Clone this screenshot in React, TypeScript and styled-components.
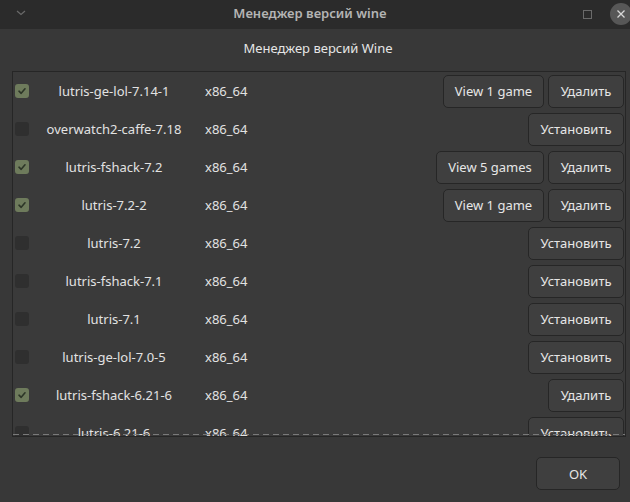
import React from "react";
import styled, { createGlobalStyle } from "styled-components";

const GlobalStyle = createGlobalStyle`
  html, body {
    margin: 0;
    padding: 0;
    background: #383838;
  }
  body {
    font-family: "Noto Sans", "Open Sans", sans-serif;
    font-size: 13px;
    color: #e4e4e4;
  }
`;

type Build = {
  name: string;
  arch: string;
  installed: boolean;
  games?: number;
};

const builds: Build[] = [
  { name: "lutris-ge-lol-7.14-1", arch: "x86_64", installed: true, games: 1 },
  { name: "overwatch2-caffe-7.18", arch: "x86_64", installed: false },
  { name: "lutris-fshack-7.2", arch: "x86_64", installed: true, games: 5 },
  { name: "lutris-7.2-2", arch: "x86_64", installed: true, games: 1 },
  { name: "lutris-7.2", arch: "x86_64", installed: false },
  { name: "lutris-fshack-7.1", arch: "x86_64", installed: false },
  { name: "lutris-7.1", arch: "x86_64", installed: false },
  { name: "lutris-ge-lol-7.0-5", arch: "x86_64", installed: false },
  { name: "lutris-fshack-6.21-6", arch: "x86_64", installed: true },
  { name: "lutris-6.21-6", arch: "x86_64", installed: false },
];

const Window = styled.div`
  width: 630px;
  height: 502px;
  display: flex;
  flex-direction: column;
  background: #383838;
  overflow: hidden;
`;

const TitleBar = styled.div`
  height: 29px;
  flex: none;
  display: grid;
  grid-template-columns: 40px 1fr 60px;
  align-items: center;
  background: #2b2b2b;
  padding-bottom: 4px;
  box-sizing: border-box;
`;

const TitleText = styled.div`
  text-align: center;
  font-weight: 600;
  font-size: 13px;
  color: #b4b4b4;
  padding-left: 10px;
`;

const TitleLeft = styled.div`
  display: flex;
  justify-content: center;
  padding-left: 2px;
`;

const TitleControls = styled.div`
  display: flex;
  align-items: center;
  justify-content: flex-end;
  gap: 18px;
  padding-top: 3px;
`;

const CloseButton = styled.div`
  width: 22px;
  height: 22px;
  border-radius: 50%;
  background: #575757;
  display: flex;
  align-items: center;
  justify-content: center;
  margin-right: -2px;
`;

const Heading = styled.div`
  height: 42px;
  flex: none;
  box-sizing: border-box;
  padding-top: 10px;
  padding-left: 6px;
  text-align: center;
  color: #e6e6e6;
  line-height: 18px;
`;

const ListFrame = styled.div`
  position: relative;
  height: 366px;
  flex: none;
  margin: 0 4px 0 12px;
  border: 1px solid #262626;
  background: #3a3a3a;
  box-sizing: border-box;
  overflow: hidden;
`;

/* scroll undershoot marker drawn over the last visible row */
const Undershoot = styled.div`
  position: absolute;
  left: 0;
  right: 0;
  bottom: 1px;
  height: 1px;
  background-image: linear-gradient(to right, #7a7a7a 0 6px, transparent 6px 10px);
  background-size: 10px 1px;
`;

const Row = styled.div`
  height: 38px;
  display: grid;
  grid-template-columns: 14px 170px 1fr auto;
  align-items: center;
  padding: 0 1px 0 2px;
`;

const Check = styled.div<{ $checked: boolean }>`
  width: 14px;
  height: 14px;
  border-radius: 3px;
  background: ${(p) => (p.$checked ? "#6e7b5c" : "#2f2f2f")};
  display: flex;
  align-items: center;
  justify-content: center;
`;

const Name = styled.div`
  text-align: center;
  white-space: nowrap;
  color: #e2e2e2;
`;

const Arch = styled.div`
  padding-left: 6px;
  color: #e2e2e2;
`;

const Actions = styled.div`
  display: flex;
  gap: 4px;
  justify-content: flex-end;
`;

const Button = styled.button<{ $width: number }>`
  width: ${(p) => p.$width}px;
  height: 33px;
  box-sizing: border-box;
  border: 1px solid #262626;
  border-radius: 5px;
  background: #3f3f3f;
  color: #e6e6e6;
  font-family: inherit;
  font-size: 13px;
  padding: 0;
  cursor: pointer;
`;

const Footer = styled.div`
  flex: none;
  display: flex;
  justify-content: flex-end;
  padding: 20px 10px 12px 0;
`;

const CheckMark = () => (
  <svg width="10" height="10" viewBox="0 0 10 10">
    <path d="M2 5.2 L4.2 7.3 L8 2.8" fill="none" stroke="#2c3527" strokeWidth="1.6" strokeLinecap="round" strokeLinejoin="round" />
  </svg>
);

function BuildRow({ build }: { build: Build }) {
  return (
    <Row>
      <Check $checked={build.installed}>{build.installed && <CheckMark />}</Check>
      <Name>{build.name}</Name>
      <Arch>{build.arch}</Arch>
      <Actions>
        {build.installed && build.games ? (
          <Button $width={build.games > 1 ? 108 : 101}>
            {build.games > 1 ? `View ${build.games} games` : `View ${build.games} game`}
          </Button>
        ) : null}
        {build.installed ? <Button $width={76}>Удалить</Button> : <Button $width={96}>Установить</Button>}
      </Actions>
    </Row>
  );
}

export default function App() {
  return (
    <Window>
      <GlobalStyle />
      <TitleBar>
        <TitleLeft>
          <svg width="10" height="6" viewBox="0 0 10 6">
            <path d="M1 1 L5 4.5 L9 1" fill="none" stroke="#6a6a6a" strokeWidth="1.2" />
          </svg>
        </TitleLeft>
        <TitleText>Менеджер версий wine</TitleText>
        <TitleControls>
          <svg width="9" height="9" viewBox="0 0 9 9">
            <rect x="0.5" y="0.5" width="8" height="8" fill="none" stroke="#6a6a6a" />
          </svg>
          <CloseButton>
            <svg width="10" height="10" viewBox="0 0 10 10">
              <path d="M1.5 1.5 L8.5 8.5 M8.5 1.5 L1.5 8.5" stroke="#d8d8d8" strokeWidth="1.3" />
            </svg>
          </CloseButton>
        </TitleControls>
      </TitleBar>
      <Heading>Менеджер версий Wine</Heading>
      <ListFrame>
        {builds.map((b) => (
          <BuildRow key={b.name} build={b} />
        ))}
        <Undershoot />
      </ListFrame>
      <Footer>
        <Button $width={84}>OK</Button>
      </Footer>
    </Window>
  );
}
